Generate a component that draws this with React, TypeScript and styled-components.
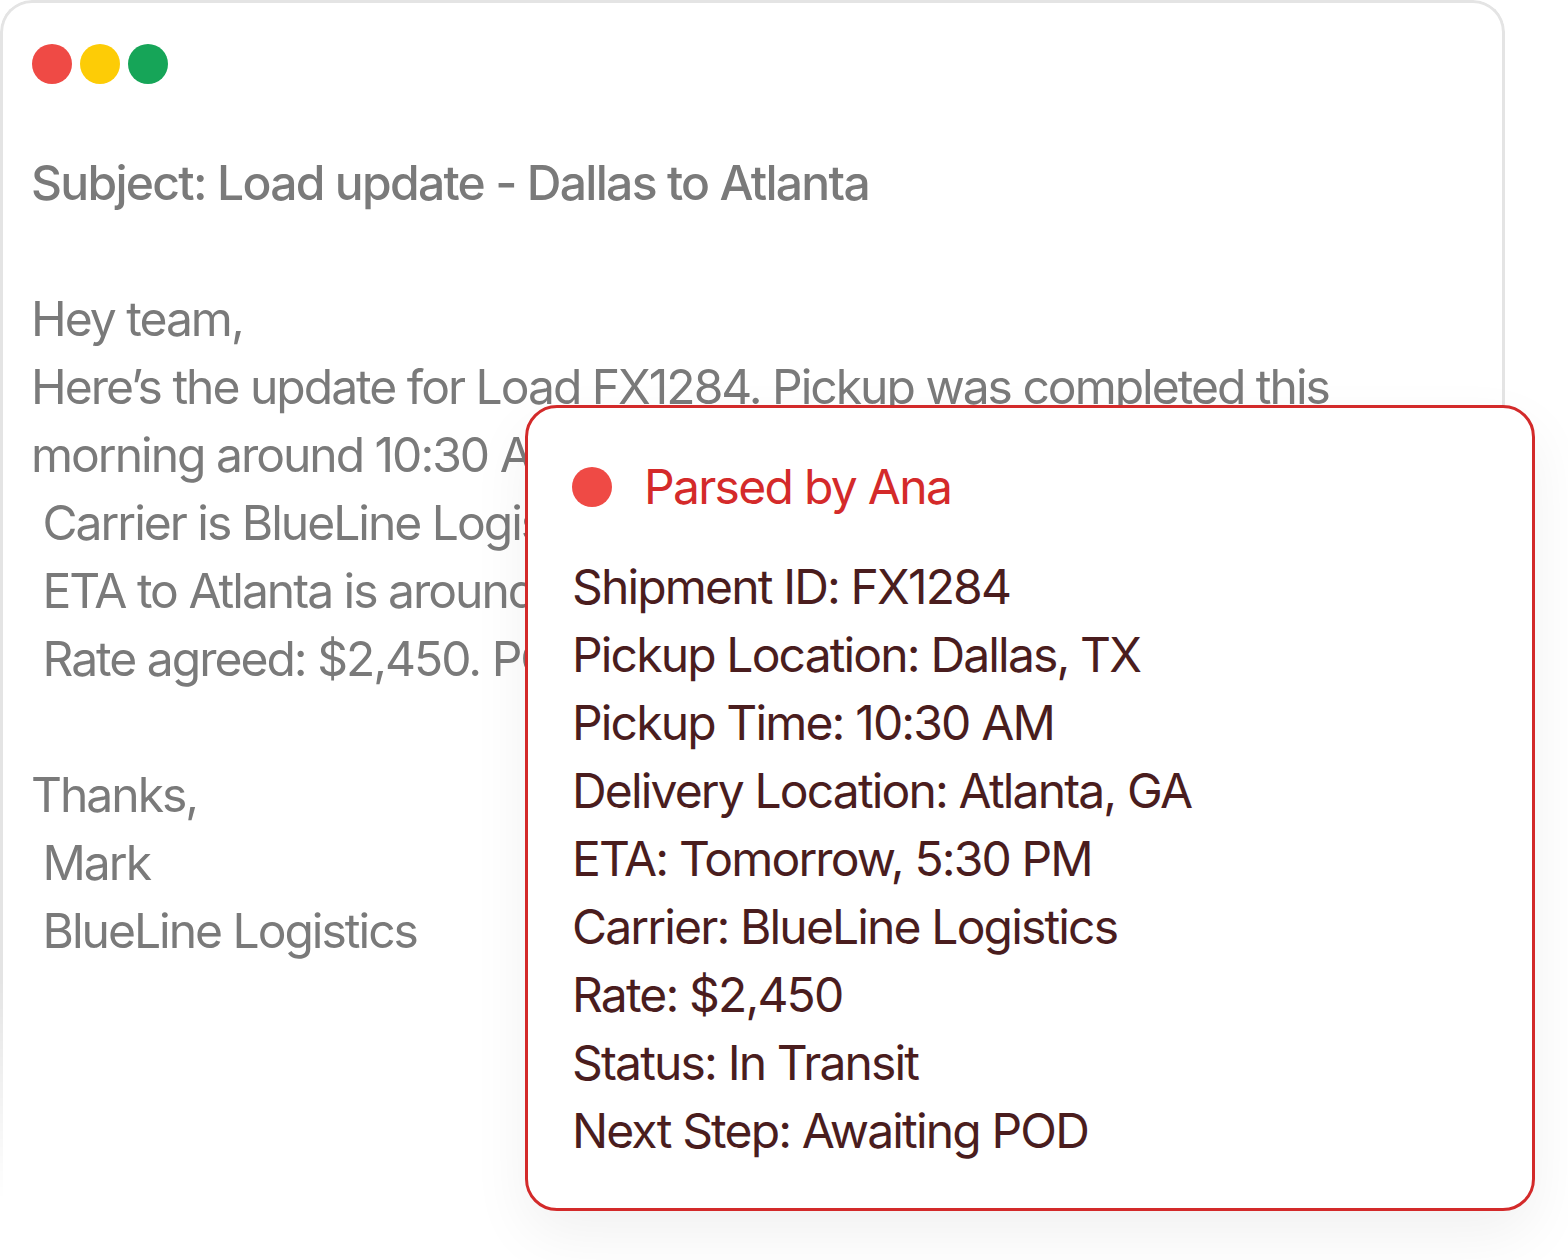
import React from "react";
import styled, { createGlobalStyle } from "styled-components";

const Global = createGlobalStyle`
  html, body { margin: 0; padding: 0; background: #ffffff; }
  body { font-family: Inter, "Noto Sans", sans-serif; -webkit-font-smoothing: antialiased; }
`;

const Stage = styled.div`
  position: relative;
  width: 1568px;
  height: 1260px;
  overflow: hidden;
  background: #ffffff;
`;

const Window = styled.div`
  box-sizing: border-box;
  width: 1505px;
  height: 1260px;
  border: 3px solid #e4e4e4;
  border-bottom: none;
  border-radius: 32px 32px 0 0;
  padding: 41px 28px 0 29px;
  display: flex;
  flex-direction: column;
  mask-image: linear-gradient(to bottom, #000 0px, #000 980px, transparent 1200px);
  -webkit-mask-image: linear-gradient(to bottom, #000 0px, #000 980px, transparent 1200px);
`;

const Dots = styled.div`
  display: flex;
  gap: 8px;
  height: 40px;
`;

const Dot = styled.span<{ $c: string }>`
  width: 40px;
  height: 40px;
  border-radius: 50%;
  background: ${(p) => p.$c};
`;

const Mail = styled.div`
  margin-top: 65px;
  margin-left: -1px;
  font-size: 48px;
  line-height: 68px;
  color: #7a7a7a;
  white-space: pre;
  letter-spacing: -2px;
`;

const Subject = styled.div`
  font-weight: 500;
  margin-bottom: 68px;
  letter-spacing: -1.7px;
`;

const Line = styled.div`
  min-height: 68px;
`;

const Card = styled.div`
  position: absolute;
  left: 525px;
  top: 405px;
  box-sizing: border-box;
  width: 1010px;
  height: 806px;
  background: #ffffff;
  border: 3px solid #d32a2a;
  border-radius: 32px;
  box-shadow: 0 24px 60px rgba(0, 0, 0, 0.06);
  padding: 45px 44px 40px 44px;
  display: flex;
  flex-direction: column;
  gap: 32px;
`;

const Header = styled.div`
  display: flex;
  align-items: center;
  gap: 32px;
  height: 68px;
`;

const Badge = styled.span`
  width: 40px;
  height: 40px;
  border-radius: 50%;
  background: #ef4a45;
  flex: none;
`;

const Title = styled.div`
  font-size: 48px;
  line-height: 68px;
  color: #d42a2a;
  letter-spacing: -1.7px;
`;

const Fields = styled.div`
  display: flex;
  flex-direction: column;
`;

const Field = styled.div`
  font-size: 48px;
  line-height: 68px;
  color: #4a1d1e;
  white-space: nowrap;
  letter-spacing: -1.85px;
`;

const mailLines = [
  "Hey team,",
  "Here\u2019s the update for Load FX1284. Pickup was completed this",
  "morning around 10:30 AM in Dallas.",
  " Carrier is BlueLine Logistics.",
  " ETA to Atlanta is around tomorrow, 5:30 PM.",
  " Rate agreed: $2,450. POD to follow.",
  "",
  "Thanks,",
  " Mark",
  " BlueLine Logistics",
];

const fields = [
  "Shipment ID: FX1284",
  "Pickup Location: Dallas, TX",
  "Pickup Time: 10:30 AM",
  "Delivery Location: Atlanta, GA",
  "ETA: Tomorrow, 5:30 PM",
  "Carrier: BlueLine Logistics",
  "Rate: $2,450",
  "Status: In Transit",
  "Next Step: Awaiting POD",
];

export default function App() {
  return (
    <>
      <Global />
      <Stage>
        <Window>
          <Dots>
            <Dot $c="#ef4a45" />
            <Dot $c="#fdcc06" />
            <Dot $c="#16a558" />
          </Dots>
          <Mail>
            <Subject>Subject: Load update - Dallas to Atlanta</Subject>
            {mailLines.map((l, i) => (
              <Line key={i}>{l}</Line>
            ))}
          </Mail>
        </Window>
        <Card>
          <Header>
            <Badge />
            <Title>Parsed by Ana</Title>
          </Header>
          <Fields>
            {fields.map((f) => (
              <Field key={f}>{f}</Field>
            ))}
          </Fields>
        </Card>
      </Stage>
    </>
  );
}
